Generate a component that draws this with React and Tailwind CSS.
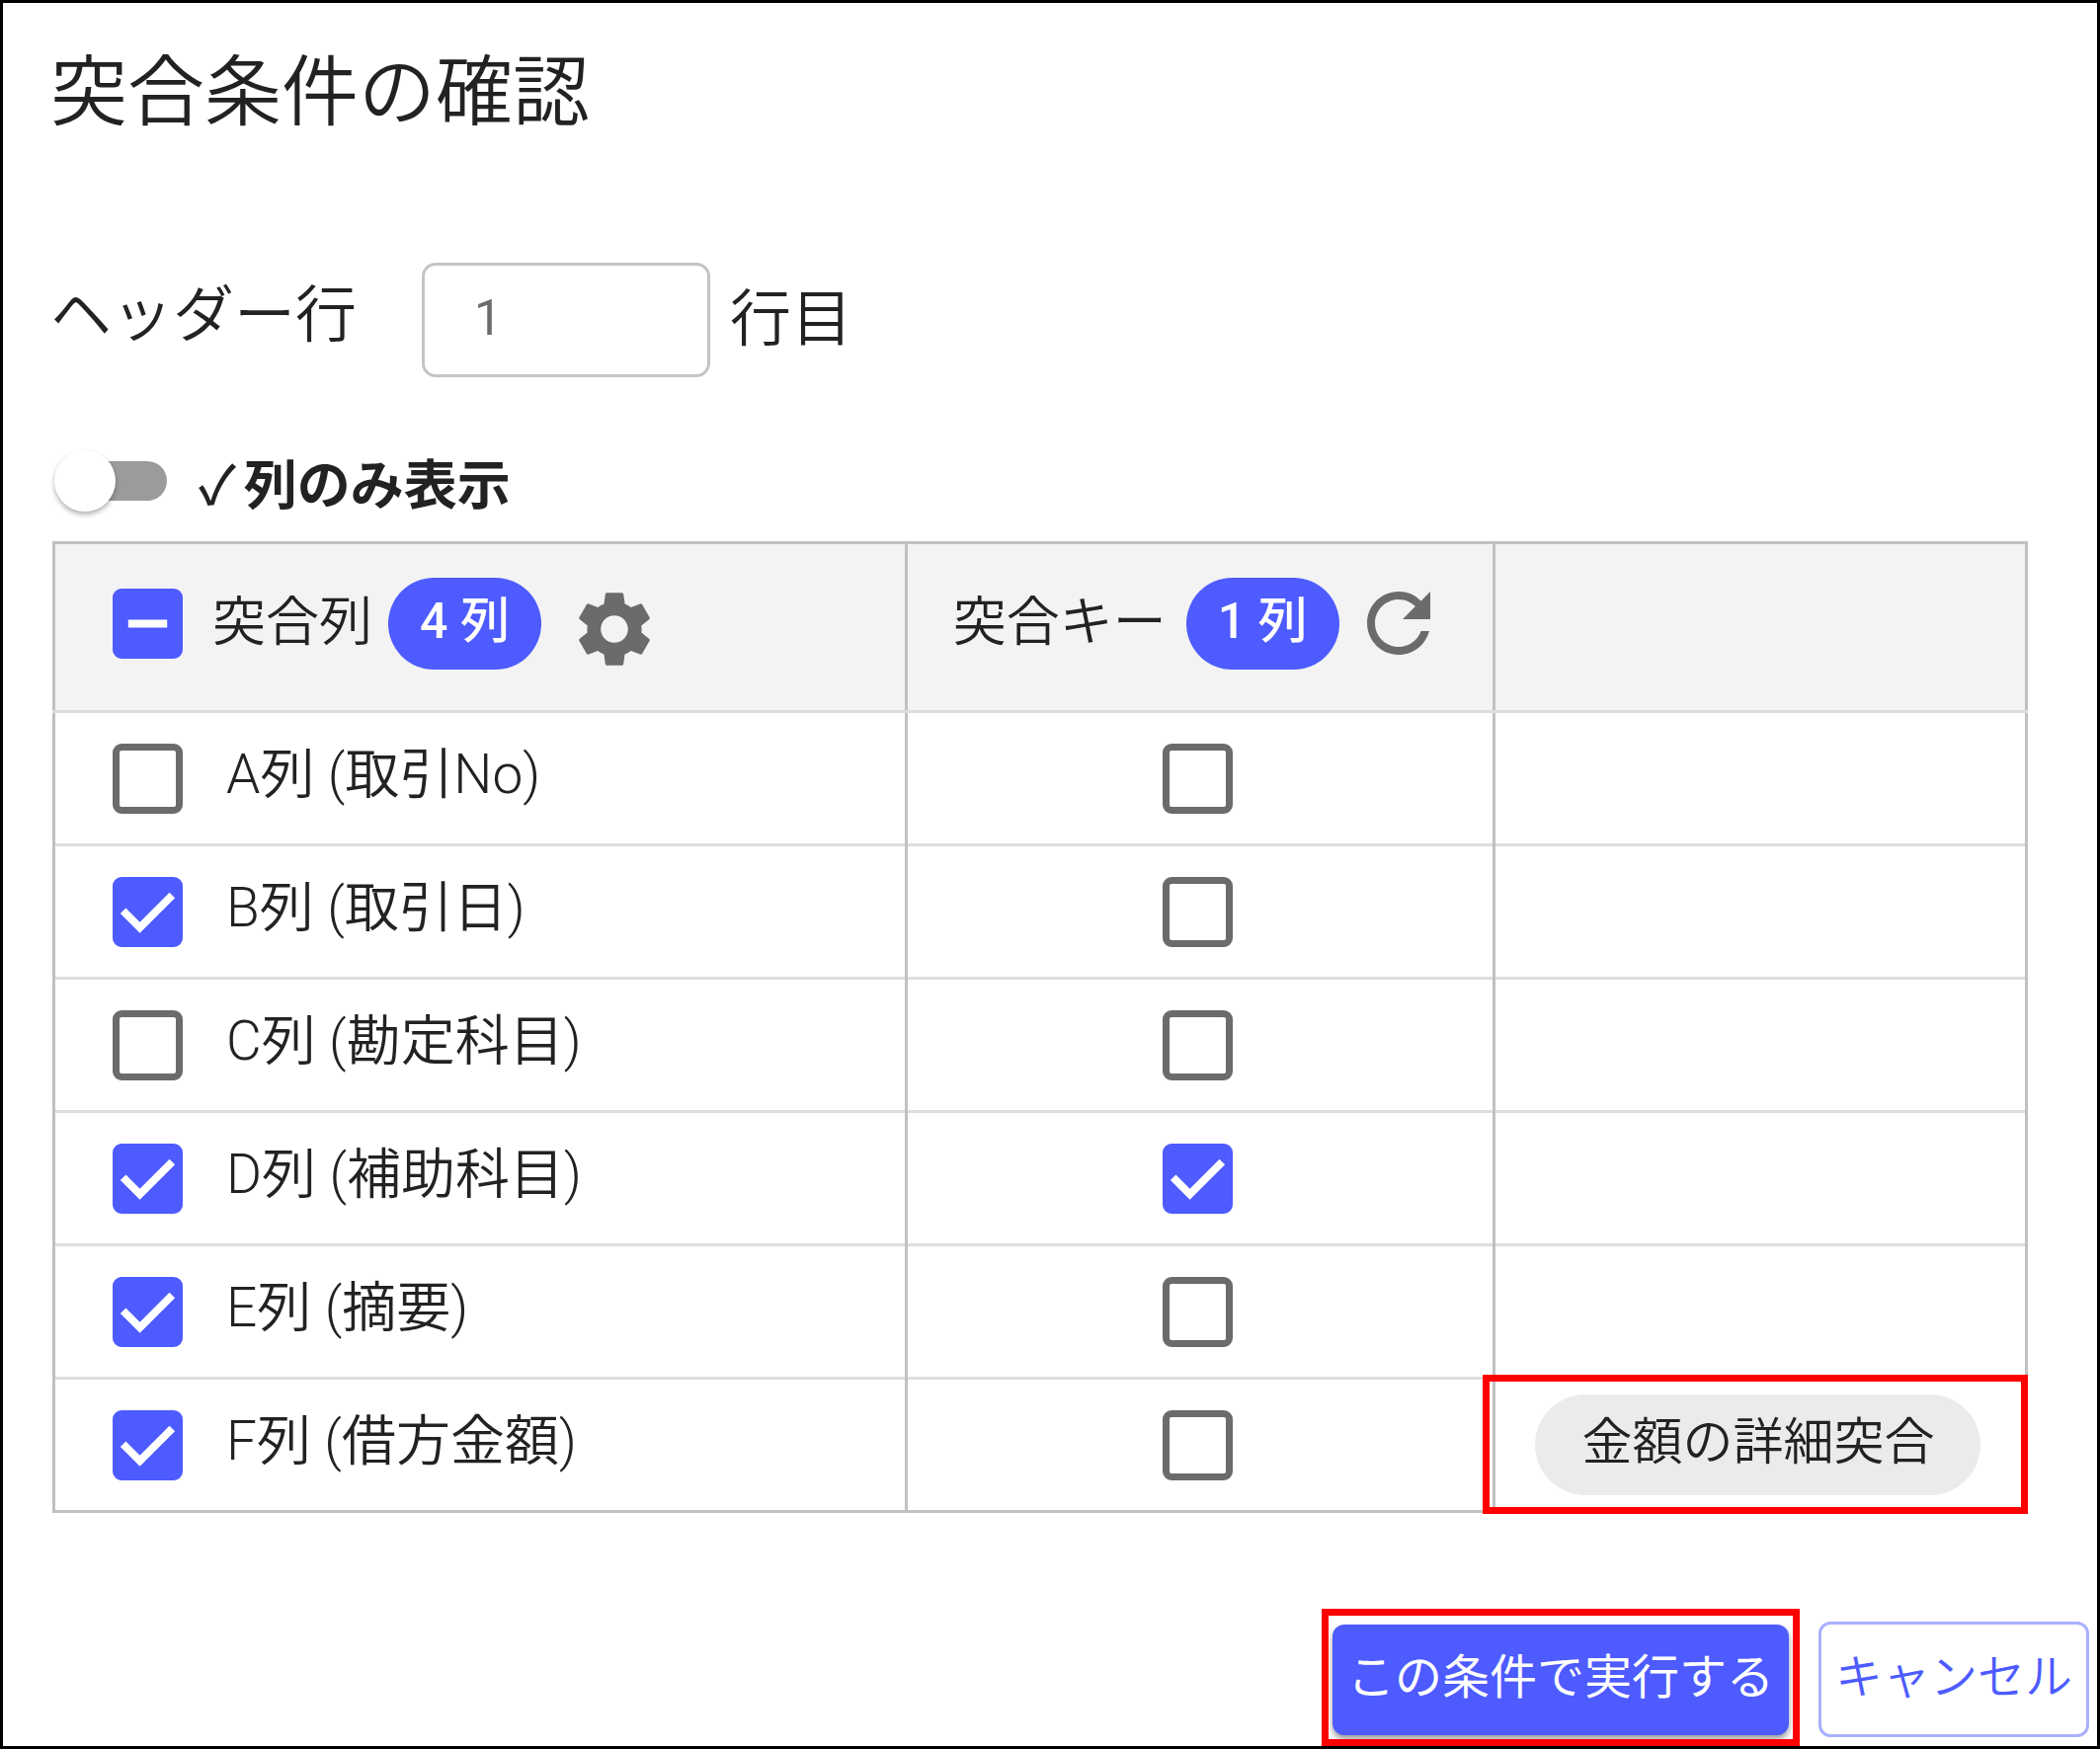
import { useEffect, useRef, useState } from 'react';
import { MdRefresh, MdSettings } from 'react-icons/md';

const INITIAL_COLUMNS = [
  { id: 'A', name: '取引No', target: false, key: false },
  { id: 'B', name: '取引日', target: true, key: false },
  { id: 'C', name: '勘定科目', target: false, key: false },
  { id: 'D', name: '補助科目', target: true, key: true },
  { id: 'E', name: '摘要', target: true, key: false },
  { id: 'F', name: '借方金額', target: true, key: false, amount: true },
];

function Checkbox({ id, checked, indeterminate = false, onChange, label }) {
  const ref = useRef(null);

  useEffect(() => {
    ref.current.indeterminate = indeterminate;
  }, [indeterminate]);

  return (
    <span className="grid size-[71px] shrink-0 place-items-center">
      <input
        ref={ref}
        id={id}
        type="checkbox"
        aria-label={label}
        checked={checked}
        onChange={onChange}
        className="col-start-1 row-start-1 size-full cursor-pointer appearance-none rounded-[9px] border-[7px] border-[#6b6b6b] bg-white checked:border-[#4d5bff] checked:bg-[#4d5bff] indeterminate:border-[#4d5bff] indeterminate:bg-[#4d5bff]"
      />
      {(checked || indeterminate) && (
        <svg
          viewBox="0 0 18 18"
          className="pointer-events-none col-start-1 row-start-1 size-full fill-none stroke-white stroke-2"
        >
          <path d={indeterminate ? 'M4 9h10' : 'M2.7 8.7L7 13l8.3-8.3'} />
        </svg>
      )}
    </span>
  );
}

function CountBadge({ count }) {
  return (
    <span className="flex h-[93px] w-[155px] shrink-0 items-center justify-center rounded-full bg-[#4d5bff] pb-1 text-[50px] font-medium text-white">
      {count} 列
    </span>
  );
}

// Red frame drawn around the part the user should look at.
function Highlight({ className }) {
  return <span className={`pointer-events-none absolute border-[7px] border-[#ff0000] ${className}`} />;
}

export default function App() {
  const [columns, setColumns] = useState(INITIAL_COLUMNS);
  const [headerRow, setHeaderRow] = useState('1');
  const [checkedOnly, setCheckedOnly] = useState(false);

  const targetCount = columns.filter((c) => c.target).length;
  const keyCount = columns.filter((c) => c.key).length;
  const allChecked = targetCount === columns.length;
  const visible = checkedOnly ? columns.filter((c) => c.target) : columns;

  const toggle = (id, field) => {
    setColumns((list) => list.map((c) => (c.id === id ? { ...c, [field]: !c[field] } : c)));
  };

  const toggleAll = () => {
    setColumns((list) => list.map((c) => ({ ...c, target: !allChecked })));
  };

  const resetKeys = () => {
    setColumns((list) => list.map((c) => ({ ...c, key: false })));
  };

  return (
    <main
      lang="ja"
      className="flex min-h-screen flex-col border-[3px] border-black bg-white pt-9 font-['Roboto','Noto_Sans_CJK_JP',sans-serif] font-[350] text-[#222222]"
    >
      <h1 className="px-12 text-[78px] leading-[112px]">突合条件の確認</h1>

      <div className="mt-[115px] flex items-center px-12 text-[62px] leading-[90px]">
        <label htmlFor="headerRow" className="w-[376px] pb-2">
          ヘッダー行
        </label>
        <input
          id="headerRow"
          type="text"
          inputMode="numeric"
          value={headerRow}
          onChange={(e) => setHeaderRow(e.target.value)}
          className="h-[116px] w-[292px] rounded-[14px] border-[3px] border-[#c4c4c4] px-[50px] pb-1 text-[50px] font-normal text-[#6b6b6b] focus:outline-none"
        />
        <span className="ml-5">行目</span>
      </div>

      <div className="mt-[60px] flex items-center px-[52px]">
        <span className="grid h-[62px] w-[114px] items-center">
          <input
            id="checkedOnly"
            type="checkbox"
            role="switch"
            checked={checkedOnly}
            onChange={(e) => setCheckedOnly(e.target.checked)}
            className="peer col-start-1 row-start-1 ml-2 h-10 cursor-pointer appearance-none rounded-full bg-[#9b9b9b] checked:bg-[#4d5bff]"
          />
          <span className="pointer-events-none col-start-1 row-start-1 size-[62px] rounded-full bg-white shadow-[0_3px_5px_rgba(0,0,0,0.3)] peer-checked:justify-self-end" />
        </span>
        <label htmlFor="checkedOnly" className="ml-8 pt-3 text-[54px] leading-[78px] font-bold">
          <span className="mr-2 font-medium">✓</span>列のみ表示
        </label>
      </div>

      <div className="relative mt-4 mr-[70px] ml-[50px]">
        <table className="w-full table-fixed border-collapse border-[3px] border-[#c0c0c0] text-[54px] leading-[78px]">
          <colgroup>
            <col className="w-[43.2%]" />
            <col className="w-[29.8%]" />
            <col className="w-[27%]" />
          </colgroup>
          <thead>
            <tr className="h-[171px] bg-[#f3f3f3]">
              <th className="border-[3px] border-[#c0c0c0] border-b-[#dddddd] p-0 pb-2 font-[350]">
                <div className="flex items-center pl-[58px]">
                  <Checkbox
                    id="all"
                    label="すべて選択"
                    checked={allChecked}
                    indeterminate={targetCount > 0 && !allChecked}
                    onChange={toggleAll}
                  />
                  <label htmlFor="all" className="mr-4 ml-[30px] whitespace-nowrap">
                    突合列
                  </label>
                  <CountBadge count={targetCount} />
                  <button type="button" aria-label="設定" className="ml-7 pt-3 text-[#6b6b6b]">
                    <MdSettings className="size-[92px]" />
                  </button>
                </div>
              </th>
              <th className="border-[3px] border-[#c0c0c0] border-b-[#dddddd] p-0 pb-2 font-[350]">
                <div className="flex items-center pl-[46px]">
                  <span className="mr-5 whitespace-nowrap">突合キー</span>
                  <CountBadge count={keyCount} />
                  <button
                    type="button"
                    aria-label="リセット"
                    onClick={resetKeys}
                    className="ml-3 text-[#6b6b6b]"
                  >
                    <MdRefresh className="size-[96px]" />
                  </button>
                </div>
              </th>
              <th className="border-[3px] border-[#c0c0c0] border-b-[#dddddd] p-0" />
            </tr>
          </thead>
          <tbody>
            {visible.map((c) => (
              <tr key={c.id} className="h-[135px] border-b-[3px] border-[#dddddd] last:border-[#c0c0c0]">
                <td className="border-x-[3px] border-x-[#c0c0c0] p-0">
                  <div className="flex items-center pl-[58px]">
                    <Checkbox
                      id={`target-${c.id}`}
                      checked={c.target}
                      onChange={() => toggle(c.id, 'target')}
                    />
                    <label htmlFor={`target-${c.id}`} className="ml-11 pb-2 text-[55px]">
                      {c.id}列 ({c.name})
                    </label>
                  </div>
                </td>
                <td className="border-x-[3px] border-x-[#c0c0c0] p-0">
                  <div className="flex justify-center pr-1">
                    <Checkbox
                      id={`key-${c.id}`}
                      label={`${c.id}列を突合キーにする`}
                      checked={c.key}
                      onChange={() => toggle(c.id, 'key')}
                    />
                  </div>
                </td>
                <td className="border-x-[3px] border-x-[#c0c0c0] p-0">
                  {c.amount && (
                    <div className="flex justify-center pr-1">
                      <button
                        type="button"
                        className="h-[102px] rounded-full bg-[#ebebeb] px-[47px] pb-1 text-[51px] whitespace-nowrap"
                      >
                        金額の詳細突合
                      </button>
                    </div>
                  )}
                </td>
              </tr>
            ))}
          </tbody>
        </table>
        <Highlight className="right-0 -bottom-px h-[141px] w-[27.6%]" />
      </div>

      <div className="mt-[110px] mr-2 mb-2 flex items-center justify-end gap-[30px] text-[48px]">
        <div className="relative">
          <button
            type="button"
            className="h-[112px] rounded-[12px] bg-[#4d5bff] px-[15px] pb-1 font-normal text-white shadow-[0_4px_6px_rgba(0,0,0,0.4)]"
          >
            この条件で実行する
          </button>
          <Highlight className="-inset-x-[11px] -top-4 -bottom-[11px]" />
        </div>
        <button
          type="button"
          className="h-[117px] rounded-[12px] border-[3px] border-[#a9b0ff] px-[14px] pb-1 text-[#4d5bff]"
        >
          キャンセル
        </button>
      </div>
    </main>
  );
}
